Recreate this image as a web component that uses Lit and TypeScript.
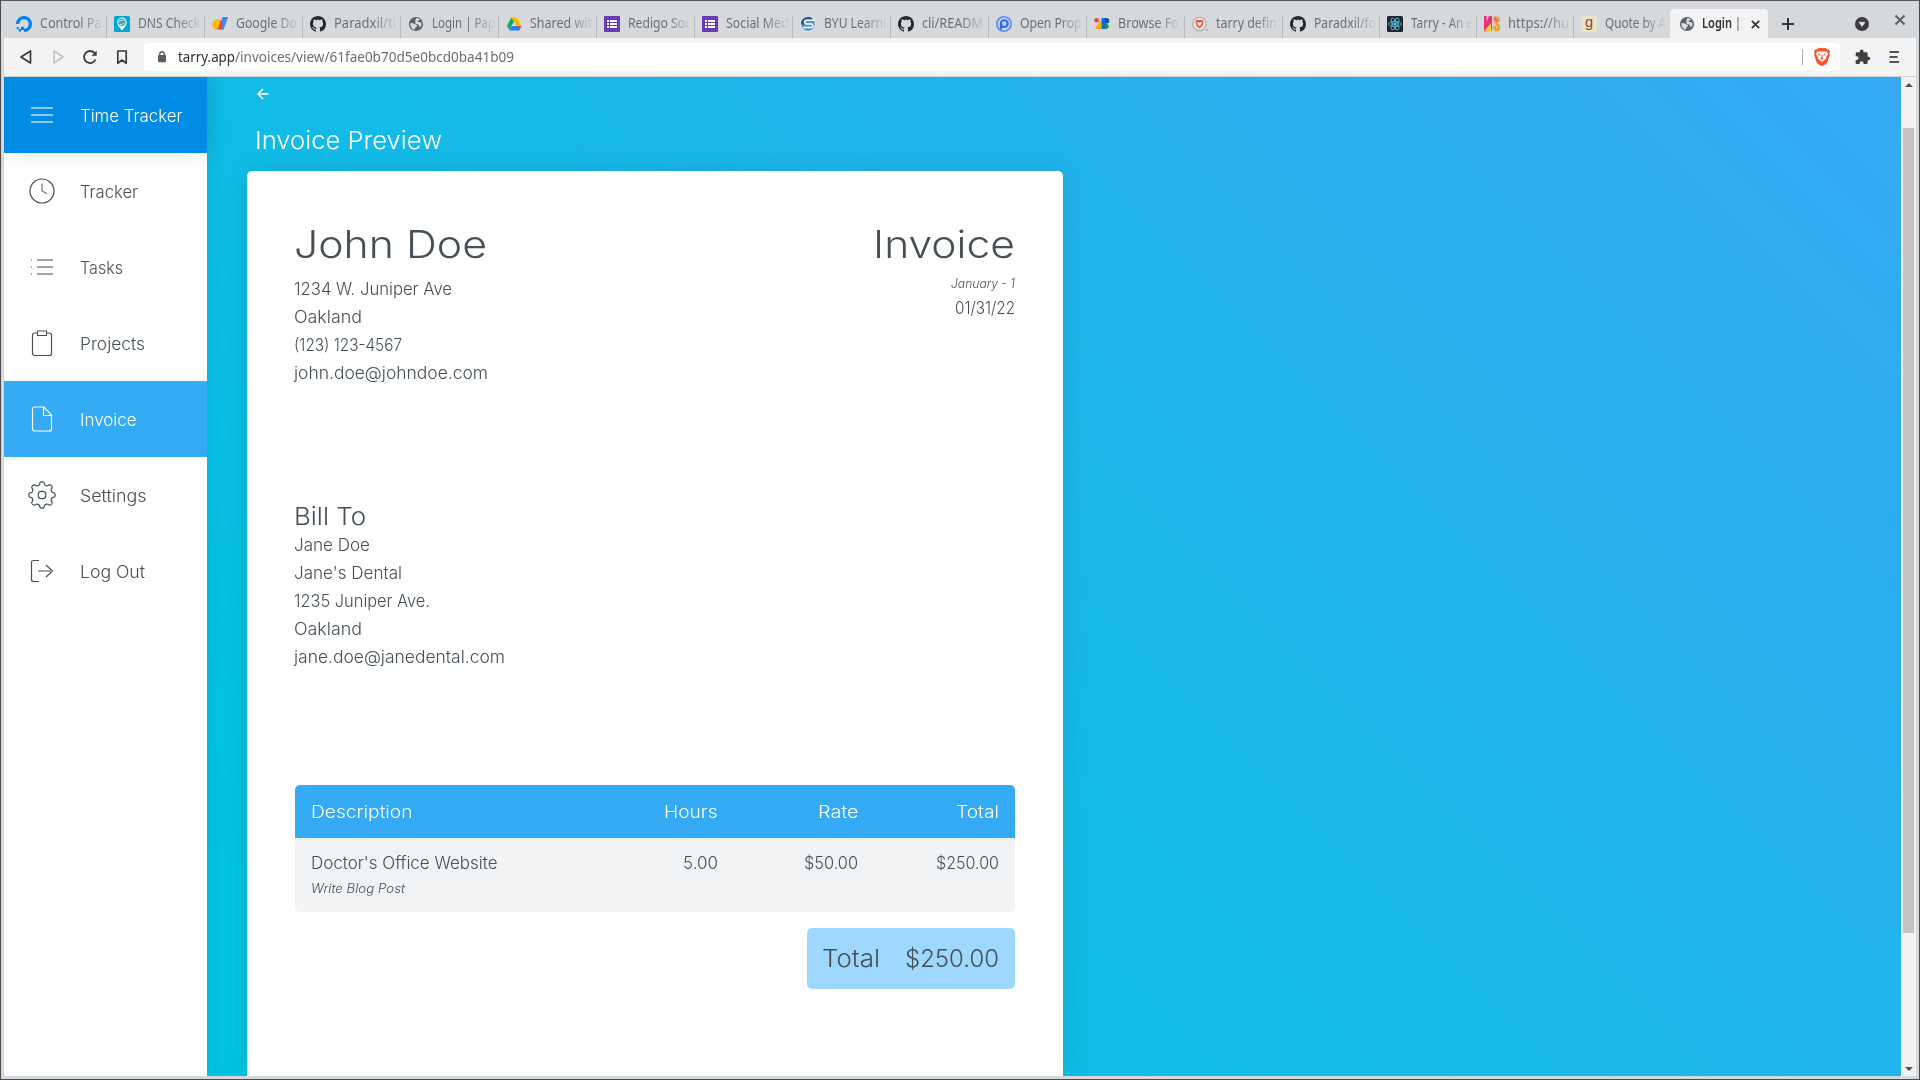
import { LitElement, html, css, svg, type TemplateResult } from "lit";
import { customElement, property } from "lit/decorators.js";

/** A single line of text whose glyphs are stretched to occupy `w` pixels. */
@customElement("fit-text")
class FitText extends LitElement {
  @property({ type: Number }) w = 0;

  static styles = css`
    :host { display: inline-block; white-space: pre; text-align: left; }
    .ink { display: inline-block; transform-origin: 0 50%; }
  `;

  updated() {
    const ink = this.renderRoot.querySelector(".ink") as HTMLElement;
    this.style.width = `${this.w}px`;
    ink.style.transform = "none";
    const natural = ink.getBoundingClientRect().width;
    if (natural > 0) ink.style.transform = `scaleX(${this.w / natural})`;
    ink.style.marginRight = `${Math.min(0, this.w - natural)}px`;
  }

  render() {
    return html`<span class="ink"><slot></slot></span>`;
  }
}

const icon = (size: number, body: TemplateResult) =>
  html`<svg width=${size} height=${size} viewBox="0 0 ${size} ${size}" fill="none" style="display:block;flex:none">${body}</svg>`;

const github = svg`<path fill="#24292e" d="M8 0C3.58 0 0 3.58 0 8c0 3.54 2.29 6.53 5.47 7.59.4.07.55-.17.55-.38 0-.19-.01-.82-.01-1.49-2.01.37-2.53-.49-2.69-.94-.09-.23-.48-.94-.82-1.13-.28-.15-.68-.52-.01-.53.63-.01 1.08.58 1.23.82.72 1.21 1.87.87 2.33.66.07-.52.28-.87.51-1.07-1.78-.2-3.64-.89-3.64-3.95 0-.87.31-1.59.82-2.15-.08-.2-.36-1.02.08-2.12 0 0 .67-.21 2.2.82.64-.18 1.32-.27 2-.27s1.36.09 2 .27c1.53-1.04 2.2-.82 2.2-.82.44 1.1.16 1.92.08 2.12.51.56.82 1.27.82 2.15 0 3.07-1.87 3.75-3.65 3.95.29.25.54.73.54 1.48 0 1.07-.01 1.93-.01 2.2 0 .21.15.46.55.38A8.01 8.01 0 0 0 16 8c0-4.42-3.58-8-8-8z"/>`;
const globe = svg`<circle cx="8" cy="8" r="7.1" fill="#5f6368"/><path fill="#d9dbde" d="M2.4 7.2C3.6 6.8 5 7 6.3 7.8c1 .7 2.400.5 2.700 1.400.3.9-.9 1.500-1.500 2.300-.4.700-.6 1.400-.7 2.100C4 13.200 2 10.500 2.400 7.200zM8.300 2.200C9.500 2.100 11 2.600 12 3.500c-.6.300-.8.900-1.500 1-.9.200-1.300.9-.5 1.400.8.400 1.800-.2 2.500.5.500.6 1 1.100 1.300 1-.1-1-.4-1.900-.9-2.800l.8 3.200c-.2 1.500-.9 2.900-2 3.800-.2-1.300-.7-2.300-1.500-3.100-1-.5-2.200-.3-2.800-1.200-.5-1 .2-1.900 0-2.600-.1-.9.200-1.700.9-2.500z"/>`;
const forms = svg`<rect width="16" height="16" rx="1" fill="#673ab7"/><path stroke="#fff" stroke-width="2" d="M3 5h2M3 8h2M3 11h2M6 5h7M6 8h7M6 11h7"/>`;

const fav: Record<string, TemplateResult> = {
  github, globe, forms,
  ocean: svg`<path stroke="#0080ff" stroke-width="3.200" d="M8 14.400A6.400 6.400 0 1 0 1.600 8"/><path fill="#0080ff" d="M5 10.700h3V14H5zM2.600 13.100H5v2.400H2.600zM.6 11h2v2.100h-2z"/>`,
  dns: svg`<rect width="16" height="16" rx="1.500" fill="#00a5d8"/><path fill="#fff" d="M8 14.500C6 11.500 3.200 9 3.200 6.400a4.800 4.800 0 0 1 9.600 0C12.800 9 10 11.500 8 14.500z"/><circle cx="8" cy="6.300" r="3.700" fill="#28a9b5"/><path stroke="#d8f2f0" stroke-width=".9" d="M5 6c1.500-2 4-2 6-1.500M6 8.500c2 0 4-.5 4.500-2"/>`,
  domains: svg`<path fill="#4285f4" d="M10.500 1H16l-4.600 12.500H6.200z"/><circle cx="5.500" cy="8.500" r="5.200" fill="#fbbc04"/><path fill="#ea4335" d="M8.300 4.200c3 2 3.100 6 .4 8.600L5.600 13.700 7 9.500z"/><path fill="#4285f4" d="M10.500 1H16l-4.600 12.500H9.200c1.800-1.800 1.900-5 .1-7.600z"/>`,
  drive: svg`<path fill="#0da960" d="M5.300 1.500L1 10l2.200 4L8.300 5z"/><path fill="#ffba00" d="M5.300 1.500h5.300L15.500 10h-5z"/><path fill="#2d7ff9" d="M3.200 14.400L5.500 10h10l-2.500 4.400z"/><path fill="#ea4335" d="M11.700 10h3.800L13.800 13z"/>`,
  byu: svg`<circle cx="8" cy="8" r="8" fill="#e8edf2"/><circle cx="8" cy="8" r="7" fill="#5697cf"/><path fill="#21588f" d="M1 8a7 7 0 0 1 12-5L5 4v5z"/><path stroke="#fff" stroke-width="1.500" d="M14 4.200H6.500Q4.600 4.200 4.600 6t2 1.900h4.500q1.900 0 1.900 1.800T11 11.500H3"/>`,
  prop: svg`<circle cx="8" cy="8" r="7.200" stroke="#5b8af5" stroke-width="1.600" fill="#c2d2f8"/><circle cx="8.300" cy="7.600" r="3.400" stroke="#3566e8" stroke-width="2.100"/><path stroke="#3566e8" stroke-width="2.200" d="M5 7.500v6"/>`,
  fonts: svg`<circle cx="2.600" cy="4.300" r="2.300" fill="#ea4335"/><path fill="#fbaa19" d="M5.500 5h2v8H1z"/><path fill="#1967d2" d="M7.500 2h4v11h-4z"/><path fill="#174ea6" d="M11 2h1.500a2.700 2.700 0 0 1 0 5.500H11z"/><path fill="#0f9d58" d="M11 7.500h1.500a2.800 2.800 0 0 1 0 5.500H11z"/>`,
  brave: svg`<circle cx="7.500" cy="8" r="6.800" stroke="#aeb2ba" stroke-width="1.300" fill="#e5e4e6"/><path fill="#fb542b" d="M4.500 4h6l1 1.200-.9 4.500L7.500 12.500 4.400 9.700l-.9-4.500z"/><path fill="#fff" d="M5 6l2.500.7L10 6l-.8 2.700-1.700 1.500-1.700-1.500z"/><circle cx="14.800" cy="14" r="1" fill="#9fa3a8"/>`,
  react: svg`<rect width="16" height="16" rx="1.500" fill="#20232a"/><g stroke="#52b9d1" stroke-width=".9"><ellipse cx="8" cy="8" rx="6.500" ry="2.500"/><ellipse cx="8" cy="8" rx="6.500" ry="2.500" transform="rotate(60 8 8)"/><ellipse cx="8" cy="8" rx="6.500" ry="2.500" transform="rotate(120 8 8)"/></g><circle cx="8" cy="8" r="1.500" fill="#61dafb"/>`,
  hs: svg`<path fill="#e5337c" d="M0 0h2.800v6l2-6H8v15H5.500V9L3 15.500H0z"/><path fill="#ffc93c" d="M0 15.500L6.800 7 7.500 15.500z"/><path stroke="#f9a32b" stroke-width="3" d="M14.700 5.500V3.800a2 2 0 0 0-4 0c0 4 4 4 4 7.500a2 2 0 0 1-4 1V10"/><path stroke="#f4608b" stroke-width="2" d="M10 1.200L14 6"/>`,
  good: svg`<rect width="16" height="16" fill="#e9e3cb"/><text x="8" y="11.400" font-family="Liberation Sans, sans-serif" font-size="14.500" text-anchor="middle" fill="#7e4a20">g</text>`,
};

const tabs: [string, string, number, number][] = [
  ["ocean", "Control Pa", 61.5, 98], ["dns", "DNS Check", 62, 98], ["domains", "Google Do", 61, 98],
  ["github", "Paradxil/ti", 62, 98], ["globe", "Login | Pap", 63, 98], ["drive", "Shared wit", 62, 98],
  ["forms", "Redigo Soc", 63, 98], ["forms", "Social Med", 62.5, 98], ["byu", "BYU Learni", 62, 98],
  ["github", "cli/READM", 61, 98], ["prop", "Open Prop", 61.5, 98], ["fonts", "Browse Fo", 61, 98],
  ["brave", "tarry defin", 61, 98], ["github", "Paradxil/fo", 62, 97], ["react", "Tarry - An e", 62, 97],
  ["hs", "https://hu", 61, 97], ["good", "Quote by A", 61, 96],
];

/** Closed outline of an eight-toothed gear with softened teeth. */
const gearPath = (() => {
  const points: string[] = [];
  for (let i = 0; i < 240; i++) {
    const t = (i / 240) * Math.PI * 2;
    const r = 11.7 + 1.45 * (Math.tanh(2.2 * Math.cos(8 * t)) / Math.tanh(2.2));
    points.push(`${(14 + r * Math.sin(t)).toFixed(2)} ${(14 - r * Math.cos(t)).toFixed(2)}`);
  }
  return `M${points.join("L")}Z`;
})();

const nav: [string, number, TemplateResult][] = [
  ["Tracker", 58, svg`<circle cx="14" cy="14" r="12" stroke="currentColor" stroke-width="1.200"/><path d="M14 6.500V14l5 2.700" stroke="currentColor" stroke-width="1.200" opacity=".8"/>`],
  ["Tasks", 43, svg`<path d="M9 7h16M9 14h16M9 21h16M3 7h1M3 14h1M3 21h1" stroke="#a0a5a9" stroke-width="2"/>`],
  ["Projects", 65, svg`<rect x="4.500" y="4" width="19" height="22.500" rx="2" stroke="currentColor" stroke-width="1.200"/><rect x="9.500" y="2" width="9" height="4.500" fill="#fff" stroke="currentColor" stroke-width="1"/>`],
  ["Invoice", 56.5, svg`<path d="M6.500 2H16l7.500 8v14a2 2 0 0 1-2 2h-15a2 2 0 0 1-2-2V4a2 2 0 0 1 2-2zM15.500 2v8.500h8" stroke="currentColor" stroke-width="1.200"/>`],
  ["Settings", 66.5, svg`<path d=${gearPath} stroke="currentColor" stroke-width="1.200"/><rect x="10.300" y="10.300" width="7.400" height="7.400" rx="3" stroke="currentColor" stroke-width="1.200"/>`],
  ["Log Out", 65, svg`<path d="M11 3.500H5.500a2 2 0 0 0-2 2v17a2 2 0 0 0 2 2H11M18 8l6.500 6-6.500 6" stroke="currentColor" stroke-width="1.200"/><path d="M10 14h14" stroke="#a0a5a9" stroke-width="2"/>`],
];

const t = (text: string, w: number) => html`<fit-text .w=${w}>${text}</fit-text>`;

@customElement("app-root")
class AppRoot extends LitElement {
  static styles = css`
    :host { display: block; width: 1920px; height: 1080px; overflow: hidden; }
    * { box-sizing: border-box; }
    .window { height: 1080px; display: flex; flex-direction: column; background: #d5d9dc; border: 1px solid #4e4a4e; border-top-color: #5c575b; padding: 0 3px 3px; }
    .strip { height: 37px; flex: none; display: flex; align-items: flex-end; padding-left: 5px; font: 13.800px/16px "Noto Sans", sans-serif; color: #6c7174; }
    .tab { height: 22px; flex: none; display: flex; align-items: center; gap: 8px; padding: 0 3px 6px 7px; border-right: 1px solid #b7babc; }
    .tab:nth-child(17) { border-right-color: transparent; }
    .label { flex: 1; min-width: 0; height: 18px; line-height: 16px; white-space: nowrap; mask-image: linear-gradient(90deg, #000 62%, rgba(0, 0, 0, .05)); }
    .active { width: 98px; height: 29px; flex: none; display: flex; align-items: center; padding: 7px 8px 6px 9px; background: #f3f3f3; border-radius: 4px 4px 0 0; color: #333; font-weight: 600; }
    .active .label { margin-left: 7px; mask-image: linear-gradient(90deg, #000 65%, transparent 90%); }
    .plus { margin: 0 0 6px 12px; }
    .down { margin: 0 0 6px auto; }
    .close { margin: 0 10px 12px 25px; }
    .toolbar { height: 39px; flex: none; display: flex; align-items: center; gap: 14px; padding: 0 13px; background: #f3f3f3; border-bottom: 1px solid #cfd0d1; }
    .field { flex: 1; height: 28px; margin: 0 -1px; display: flex; align-items: center; background: #fff; border-radius: 4px; padding: 0 9px 0 12px; font: 14.300px/20px "Noto Sans", sans-serif; color: #696c72; }
    .host { color: #2c2e33; margin-left: 10px; height: 20px; }
    .path { height: 20px; }
    .divider { width: 1px; height: 16px; background: #aaa; margin: 0 10px 0 auto; }
    .view { flex: 1; min-height: 0; display: flex; background: linear-gradient(45deg, #00c4e0 15%, #36a9f5); font-family: Inter, sans-serif; font-weight: 300; font-size: 16.900px; color: #454f57; overflow: hidden; }
    .side { width: 203px; flex: none; background: #fff; box-shadow: 0 0 20px rgba(0, 0, 0, .08); }
    .item { height: 76px; display: flex; align-items: center; gap: 24px; padding-left: 24px; line-height: 28px; }
    .item.head { background: #008be4; color: #fff; box-shadow: 0 0 20px rgba(0, 0, 0, .12); }
    .item.on { background: #33aaf3; color: #fff; }
    .item fit-text { margin-top: 1px; }
    .main { flex: 1; min-width: 0; display: flex; flex-direction: column; padding: 9px 0 0 40px; overflow: hidden; }
    .back { margin-left: 8px; height: 16px; }
    .title { color: #fff; font-size: 24px; line-height: 36px; height: 69px; padding: 21px 0 0 8px; }
    .card { width: 816px; flex: 1; min-height: 0; background: #fff; border-radius: 5px 5px 0 0; box-shadow: 0 0 26px rgba(0, 0, 0, .11); padding: 48px; overflow: hidden; }
    .row { display: flex; justify-content: space-between; }
    .col { display: flex; flex-direction: column; line-height: 28px; margin-left: -1px; }
    .right { align-items: flex-end; }
    .big { font-size: 38.500px; line-height: 50px; height: 56px; }
    .small { font-size: 12.600px; font-style: italic; }
    .period { line-height: 18px; height: 19px; }
    .bill { margin-top: 114px; }
    .sub { font-size: 24px; line-height: 32px; height: 29.500px; }
    .table { margin-top: 114.500px; border-radius: 5px; overflow: hidden; background: #f1f3f5; }
    .cells { display: grid; grid-template-columns: 1fr 110px 140.500px 141px; padding: 0 16px; }
    .cells > * { justify-self: end; }
    .cells > :first-child { justify-self: start; }
    .th { height: 53px; line-height: 54px; background: #33aaf3; color: #fff; }
    .td { height: 74px; padding-top: 11px; line-height: 28px; }
    .desc { display: flex; flex-direction: column; }
    .desc .small { line-height: 23px; }
    .sum { margin: 16px 0 0 auto; width: 208px; height: 61px; display: flex; align-items: center; justify-content: space-between; padding: 0 16px 0 15px; border-radius: 5px; background: #9fd8fe; font-size: 24px; line-height: 36px; }
    .bar { width: 15px; flex: none; background: #f1f1f1; display: flex; flex-direction: column; align-items: center; padding: 6px 0 5px; }
    .thumb { width: 11px; height: 805px; margin-top: 41px; background: #c1c1c1; }
    .bar .end { margin-top: auto; }
    svg { display: block; flex: none; }
  `;

  private renderTabs() {
    return html`<div class="strip">
      ${tabs.map(([f, label, w, width]) => html`<div class="tab" style="width:${width}px">${icon(16, fav[f])}<div class="label">${t(label, w)}</div></div>`)}
      <div class="active">
        ${icon(16, globe)}
        <div class="label">${t("Login |", 39)}</div>
        <svg width="9" height="9" viewBox="0 0 9 9"><path d="M.8.8l7.400 7.400M8.200.8L.8 8.200" stroke="#333" stroke-width="1.700"/></svg>
      </div>
      <svg class="plus" width="16" height="16" viewBox="0 0 16 16"><path d="M8 2v12M2 8h12" stroke="#333" stroke-width="2"/></svg>
      <svg class="down" width="14" height="16" viewBox="0 0 14 16"><circle cx="7" cy="8" r="7" fill="#3c3c3e"/><path d="M4 6.200h6L7 10.500z" fill="#e4e6e8" stroke="#e4e6e8" stroke-linejoin="round" stroke-width=".6"/></svg>
      <svg class="close" width="12" height="12" viewBox="0 0 12 12"><path d="M1.500 1.500l9 9M10.500 1.500l-9 9" stroke="#5f6265" stroke-width="1.900"/></svg>
    </div>`;
  }

  private renderToolbar() {
    return html`<div class="toolbar">
      ${icon(18, svg`<path d="M4 9l9.500-6v12z" stroke="#3a3a3c" stroke-width="1.700" stroke-linejoin="round"/>`)}
      ${icon(18, svg`<path d="M14 9L5 3v12z" stroke="#c3c3c4" stroke-width="1.600" stroke-linejoin="round"/>`)}
      ${icon(18, svg`<path d="M13.500 5A6 6 0 1 0 14.500 11.500" stroke="#3a3a3c" stroke-width="1.800"/><path d="M15.700 2.500v5.300h-5.200z" fill="#3a3a3c"/>`)}
      ${icon(18, svg`<path d="M4.800 3h8.400v12.300L9 12l-4.200 3.300z" stroke="#3a3a3c" stroke-width="1.700" stroke-linejoin="round"/>`)}
      <div class="field">
        <svg width="12" height="14" viewBox="0 0 12 14" fill="none"><rect x="2" y="5" width="8" height="7.300" rx="1" fill="#5a5d63"/><path d="M3.800 5.500V3.900a2.200 2.200 0 0 1 4.400 0v1.600" stroke="#5a5d63" stroke-width="1.400"/></svg>
        <span class="host">${t("tarry.app", 57)}</span><span class="path">${t("/invoices/view/61fae0b70d5e0bcd0ba41b09", 279)}</span>
        <div class="divider"></div>
        <svg width="18" height="20" viewBox="0 0 18 20"><path fill="#fb542b" d="M5.500 1h7l1.800 1.500 1.500-.2 1.200 2.500-.5 1.500.4 1.400-2.400 7.300c-.3.900-1 1.700-1.800 2.300L9 19.200l-3.700-1.900c-.8-.6-1.500-1.400-1.800-2.300L1.100 7.700l.4-1.400L1 4.800l1.200-2.500 1.500.2z"/><path fill="#fff" d="M4 4.700l2.800-.5 2.200.6 2.200-.6 2.800.5 1 2.500-2.100 3.200.3 1.200-2 1.600L9 15l-2.200-1.800-2-1.600.3-1.200L3 7.200z"/><path fill="#fb542b" d="M5 6.800l2.700.7v1L5.600 8.200zM13 6.800l-2.700.7v1l2.100-.3zM8.400 8h1.200v3l1.200.7L9 12.700l-1.800-1 1.200-.7z"/></svg>
      </div>
      ${icon(18, svg`<path fill="#3f4043" d="M15.600 8.800h-1V5.700c0-.8-.6-1.400-1.400-1.400h-2.700V3.400a1.800 1.800 0 0 0-3.600 0v.9H4.100c-.8 0-1.400.6-1.400 1.400v2.500h.9a1.900 1.900 0 0 1 0 3.800h-1v2.700c0 .8.6 1.400 1.500 1.400h2.600v-1a1.900 1.900 0 0 1 3.800 0v1h2.700c.8 0 1.400-.6 1.400-1.400v-2.500h1a1.700 1.700 0 0 0 0-3.400z"/>`)}
      ${icon(18, svg`<path d="M4.500 4H14M4.500 9h8M4.500 14H14" stroke="#555" stroke-width="2"/>`)}
    </div>`;
  }

  private renderCard() {
    return html`<div class="card">
      <div class="row">
        <div class="col">
          <div class="big">${t("John Doe", 193)}</div>
          ${t("1234 W. Juniper Ave", 158)}${t("Oakland", 68)}${t("(123) 123-4567", 108)}${t("john.doe@johndoe.com", 194)}
        </div>
        <div class="col right">
          <div class="big">${t("Invoice", 142)}</div>
          <div class="small period">${t("January - 1", 64)}</div>
          ${t("01/31/22", 60)}
        </div>
      </div>
      <div class="col bill">
        <div class="sub">${t("Bill To", 72)}</div>
        ${t("Jane Doe", 76)}${t("Jane's Dental", 108)}${t("1235 Juniper Ave.", 136)}${t("Oakland", 68)}${t("jane.doe@janedental.com", 211)}
      </div>
      <div class="table">
        <div class="cells th">${t("Description", 101.5)}${t("Hours", 53.5)}${t("Rate", 40.5)}${t("Total", 43)}</div>
        <div class="cells td">
          <div class="desc">${t("Doctor's Office Website", 186.5)}<span class="small">${t("Write Blog Post", 94)}</span></div>
          ${t("5.00", 35)}${t("$50.00", 54)}${t("$250.00", 63)}
        </div>
      </div>
      <div class="sum">${t("Total", 58)}${t("$250.00", 94)}</div>
    </div>`;
  }

  render() {
    return html`<div class="window">
      ${this.renderTabs()}${this.renderToolbar()}
      <div class="view">
        <div class="side">
          <div class="item head">${icon(28, svg`<path d="M3 7h22M3 14h22M3 21h22" stroke="#8cc9f4" stroke-width="2"/>`)}${t("Time Tracker", 102.5)}</div>
          ${nav.map(([label, w, glyph]) => html`<div class="item ${label === "Invoice" ? "on" : ""}">${icon(28, glyph)}${t(label, w)}</div>`)}
        </div>
        <div class="main">
          <div class="back">${icon(16, svg`<path d="M13.500 8H3.500M8 3L3 8l5 5" stroke="#fff" stroke-width="1.500"/>`)}</div>
          <div class="title">${t("Invoice Preview", 187)}</div>
          ${this.renderCard()}
        </div>
        <div class="bar">
          <svg width="8" height="4" viewBox="0 0 8 4"><path d="M0 4l4-4 4 4z" fill="#505050"/></svg>
          <div class="thumb"></div>
          <svg class="end" width="8" height="4" viewBox="0 0 8 4"><path d="M0 0l4 4 4-4z" fill="#505050"/></svg>
        </div>
      </div>
    </div>`;
  }
}
